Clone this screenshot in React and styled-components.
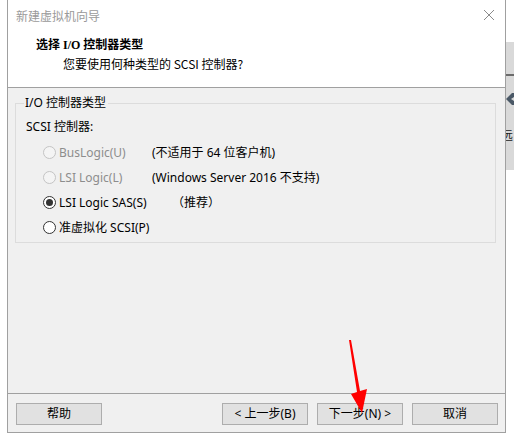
import React from "react";
import styled, { createGlobalStyle } from "styled-components";

const Global = createGlobalStyle`
  html, body { margin: 0; padding: 0; background: #ffffff; }
  body { width: 514px; height: 441px; overflow: hidden; font-family: "Noto Sans", "Noto Sans CJK SC", sans-serif; font-size: 12px; color: #000; }
`;

const Page = styled.div`
  position: relative;
  display: flex;
  align-items: flex-start;
  width: 514px;
  height: 441px;
  padding-left: 7px;
  box-sizing: border-box;
`;

const Window = styled.div`
  width: 499px;
  height: 433px;
  box-sizing: border-box;
  border: 1px solid #a0a0a0;
  border-top: none;
  display: flex;
  flex-direction: column;
  background: #f0f0f0;
`;

const Top = styled.div`
  background: #ffffff;
  height: 87px;
  border-bottom: 1px solid #a0a0a0;
  display: flex;
  flex-direction: column;
  flex-shrink: 0;
`;

const TitleBar = styled.div`
  height: 30px;
  display: flex;
  align-items: center;
  justify-content: space-between;
  padding: 0 10px 0 8px;
  font-family: "Noto Sans CJK SC", sans-serif;
  font-size: 12px;
  color: #9a9a9a;
`;

const CloseIcon = styled.svg`
  width: 12px;
  height: 12px;
`;

const Header = styled.div`
  padding: 7px 0 0 28px;
  display: flex;
  flex-direction: column;
  gap: 3px;
`;

const Heading = styled.div`
  font-family: "Liberation Serif", "Noto Sans CJK SC", serif;
  font-weight: bold;
  font-size: 12px;
  line-height: 16px;
`;

const SubHeading = styled.div`
  font-family: "Noto Sans CJK SC", sans-serif;
  font-size: 12px;
  line-height: 16px;
  padding-left: 27px;
`;

const Body = styled.div`
  flex: 1;
  padding: 7px 9px 0 7px;
`;

const Group = styled.fieldset`
  margin: 0;
  padding: 0 10px 2px 10px;
  border: 1px solid #dcdcdc;
  min-width: 0;
`;

const Legend = styled.legend`
  padding: 0 2px 0 1px;
  margin-left: -2px;
  font-family: "Noto Sans", "Noto Sans CJK SC", sans-serif;
  font-size: 12px;
  line-height: 16px;
`;

const Caption = styled.div`
  margin-top: 8px;
  line-height: 16px;
  height: 16px;
  margin-bottom: 5px;
`;

const Row = styled.div`
  height: 25px;
  display: flex;
  align-items: center;
  padding-left: 17px;
`;

const Radio = styled.span`
  width: 13px;
  height: 13px;
  box-sizing: border-box;
  border-radius: 50%;
  border: 1px solid ${(p) => (p.$disabled ? "#c4c4c4" : "#333333")};
  background: ${(p) => (p.$disabled ? "#f4f4f4" : "#ffffff")};
  display: flex;
  align-items: center;
  justify-content: center;
  flex-shrink: 0;
  &::after {
    content: "";
    display: ${(p) => (p.$checked ? "block" : "none")};
    width: 7px;
    height: 7px;
    border-radius: 50%;
    background: #333333;
  }
`;

const Label = styled.span`
  margin-left: 3px;
  width: 93px;
  color: ${(p) => (p.$disabled ? "#8d8d8d" : "#000000")};
  white-space: nowrap;
  line-height: 16px;
`;

const Note = styled.span`
  white-space: nowrap;
  line-height: 16px;
  padding-left: ${(p) => p.$indent || 0}px;
`;

const Footer = styled.div`
  height: 39px;
  flex-shrink: 0;
  border-top: 1px solid #a0a0a0;
  box-sizing: border-box;
  display: flex;
  align-items: flex-start;
  padding: 9px 7px 0 8px;
  gap: 9px;
`;

const Spacer = styled.div`
  flex: 1;
`;

const Button = styled.button`
  width: 86px;
  height: 22px;
  box-sizing: border-box;
  border: 1px solid #adadad;
  background: #e1e1e1;
  font-family: "Noto Sans", "Noto Sans CJK SC", sans-serif;
  font-size: 12px;
  color: #000;
  padding: 0;
  display: flex;
  align-items: center;
  justify-content: center;
  line-height: 16px;
`;

const Side = styled.div`
  width: 8px;
  margin-top: 42px;
  height: 128px;
  background: #d9d9d9;
  overflow: hidden;
  display: flex;
  flex-direction: column;
  flex-shrink: 0;
`;

const Dash = styled.div`
  margin-top: 32px;
  height: 2px;
  width: 8px;
  background: #6b6b6b;
`;

const SideArrow = styled.svg`
  margin-top: 17px;
  width: 8px;
  height: 12px;
  flex-shrink: 0;
`;

const SideText = styled.div`
  margin-top: 23px;
  margin-left: -5px;
  font-family: "Noto Sans CJK SC", sans-serif;
  font-size: 12px;
  line-height: 14px;
  color: #1a1a1a;
  white-space: nowrap;
`;

const ArrowOverlay = styled.svg`
  position: absolute;
  left: 0;
  top: 0;
  width: 514px;
  height: 441px;
  pointer-events: none;
`;

const options = [
  { label: "BusLogic(U)", note: "(不适用于 64 位客户机)", disabled: true },
  { label: "LSI Logic(L)", note: "(Windows Server 2016 不支持)", disabled: true },
  { label: "LSI Logic SAS(S)", note: "（推荐）", checked: true, indent: 20 },
  { label: "准虚拟化 SCSI(P)", note: "" },
];

export default function App() {
  return (
    <>
      <Global />
      <Page>
        <Window>
          <Top>
            <TitleBar>
              <span>新建虚拟机向导</span>
              <CloseIcon viewBox="0 0 12 12">
                <path d="M1 1 L11 11 M11 1 L1 11" stroke="#8a8a8a" strokeWidth="1" fill="none" />
              </CloseIcon>
            </TitleBar>
            <Header>
              <Heading>选择 I/O 控制器类型</Heading>
              <SubHeading>您要使用何种类型的 SCSI 控制器?</SubHeading>
            </Header>
          </Top>
          <Body>
            <Group>
              <Legend>I/O 控制器类型</Legend>
              <Caption>SCSI 控制器:</Caption>
              {options.map((o) => (
                <Row key={o.label}>
                  <Radio $disabled={o.disabled} $checked={o.checked} />
                  <Label $disabled={o.disabled}>{o.label}</Label>
                  <Note $indent={o.indent}>{o.note}</Note>
                </Row>
              ))}
            </Group>
          </Body>
          <Footer>
            <Button>帮助</Button>
            <Spacer />
            <Button>&lt; 上一步(B)</Button>
            <Button>下一步(N) &gt;</Button>
            <Button>取消</Button>
          </Footer>
        </Window>
        <Side>
          <Dash />
          <SideArrow viewBox="0 0 8 12">
            <path d="M6 0 L0 6 L6 12 L8 12 L8 8 L5 6 L8 4 L8 0 Z" fill="#4a5866" />
          </SideArrow>
          <SideText>远</SideText>
        </Side>
        <ArrowOverlay viewBox="0 0 514 441">
          <polygon points="349,340 351,340 360,391 367,389 362,413 351,394 357,392" fill="#ff0000" />
        </ArrowOverlay>
      </Page>
    </>
  );
}
